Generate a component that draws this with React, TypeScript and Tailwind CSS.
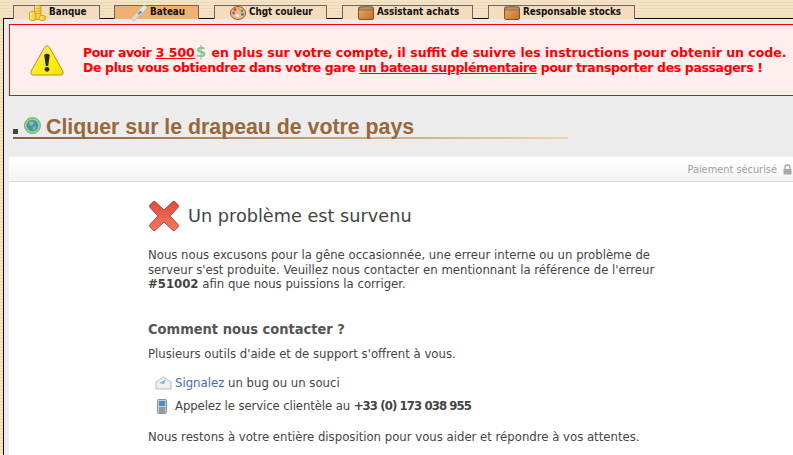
import React from "react";

function Coins() {
  return (
    <svg width="17" height="16" viewBox="0 0 17 16" className="shrink-0">
      <defs>
        <linearGradient id="gold" x1="0" y1="0" x2="1" y2="0">
          <stop offset="0" stopColor="#fff08a" />
          <stop offset="1" stopColor="#eebb22" />
        </linearGradient>
      </defs>
      <rect x="5.5" y="0.5" width="6.5" height="14" rx="1.5" fill="url(#gold)" stroke="#cfa020" />
      <path d="M6 3.5 H12 M6 6 H12 M6 8.5 H12" stroke="#d8a824" strokeWidth="0.7" />
      <rect x="0.5" y="6.5" width="6.5" height="9" rx="2" fill="url(#gold)" stroke="#cfa020" />
      <rect x="10.5" y="10.5" width="6" height="5" rx="2" fill="url(#gold)" stroke="#cfa020" />
    </svg>
  );
}

function Bottle() {
  return (
    <svg width="16" height="16" viewBox="0 0 16 16" className="shrink-0">
      <path d="M0.5 13 L8 5 L11.5 8 L4 15.5 Q2 16 0.8 14.8 Z" fill="#dcd8c4" stroke="#c4b898" strokeWidth="0.6" />
      <path d="M8 5 L12 0.8 Q14 0 15.4 1.6 Q16 3 14.8 4.2 L11.5 8 Z" fill="#dcecf6" stroke="#9cc0d8" strokeWidth="0.6" />
      <path d="M6.5 8 L10 5.5 L11 7 L8 10 Z" fill="#5a9ad0" />
    </svg>
  );
}

function Palette() {
  return (
    <svg width="16" height="14" viewBox="0 0 16 14" className="shrink-0">
      <ellipse cx="8" cy="7" rx="7.5" ry="6.5" fill="#e8bc90" stroke="#8e5c34" />
      <circle cx="5" cy="3.6" r="1.4" fill="#d83a2a" />
      <circle cx="8.6" cy="3" r="1.4" fill="#e8b020" />
      <circle cx="12" cy="4.8" r="1.4" fill="#48a048" />
      <circle cx="12.4" cy="8.4" r="1.4" fill="#3a70c8" />
      <circle cx="3.6" cy="7" r="1.4" fill="#a050b0" />
      <circle cx="7.4" cy="9.6" r="1.5" fill="#fff4e0" />
    </svg>
  );
}

function Crate({ id }: { id: string }) {
  return (
    <svg width="16" height="14" viewBox="0 0 16 14" className="shrink-0">
      <defs>
        <linearGradient id={id} x1="0" y1="0" x2="1" y2="1">
          <stop offset="0" stopColor="#eeb060" />
          <stop offset="1" stopColor="#c8682c" />
        </linearGradient>
      </defs>
      <rect x="0.5" y="1" width="15" height="12.5" rx="1.5" fill={`url(#${id})`} stroke="#80562c" />
      <path d="M1 1.5 Q8 -0.5 15 1.5 V4 H1 Z" fill="#b89468" stroke="#80562c" strokeWidth="0.7" />
    </svg>
  );
}

function Warning() {
  return (
    <svg width="34" height="31" viewBox="0 0 34 31" className="shrink-0">
      <defs>
        <linearGradient id="warn" x1="0" y1="0" x2="1" y2="1">
          <stop offset="0" stopColor="#f4e69a" />
          <stop offset="0.65" stopColor="#fbf000" />
          <stop offset="1" stopColor="#f0e000" />
        </linearGradient>
      </defs>
      <path d="M17 0.8 Q18.5 0.8 19.5 2.5 L32.8 26 Q34 30 30.5 30 H3.5 Q0 30 1.2 26 L14.5 2.5 Q15.5 0.8 17 0.8 Z" fill="url(#warn)" stroke="#b8901c" />
      <path d="M14.2 10 Q17 7.4 19.8 10 L18.2 21 H15.8 Z" fill="#2a2a1a" />
      <circle cx="17" cy="24.3" r="2.4" fill="#2a2a1a" />
    </svg>
  );
}

function Globe() {
  return (
    <svg width="17" height="17" viewBox="0 0 17 17" className="mb-[3px] shrink-0">
      <circle cx="8.5" cy="8.5" r="8" fill="#90d488" stroke="#6cb46c" />
      <circle cx="8.5" cy="8.5" r="5.8" fill="#4a90b8" />
      <path d="M5 5 Q8 3.5 10 5 L9 8 L6 9 Z M9 10 L12 9 L11 13 L9 13 Z" fill="#8cc47c" />
    </svg>
  );
}

function RedCross() {
  return (
    <svg width="32" height="32" viewBox="0 0 32 32" className="shrink-0">
      <defs>
        <linearGradient id="cross" x1="0" y1="0" x2="0" y2="1">
          <stop offset="0" stopColor="#e04a38" />
          <stop offset="1" stopColor="#f47a62" />
        </linearGradient>
      </defs>
      <path d="M7 1.5 L16 10 L25 1.5 Q26 1 27 1.8 L30.5 5.5 Q31 6.5 30 7.5 L22 16 L30 24.5 Q31 25.5 30.5 26.5 L27 30.2 Q26 31 25 30.5 L16 22 L7 30.5 Q6 31 5 30.2 L1.5 26.5 Q1 25.5 2 24.5 L10 16 L2 7.5 Q1 6.5 1.5 5.5 L5 1.8 Q6 1 7 1.5 Z" fill="url(#cross)" stroke="#b04a3a" />
    </svg>
  );
}

function Mail() {
  return (
    <svg width="17" height="14" viewBox="0 0 17 14" className="shrink-0">
      <path d="M1 6 L8.5 1 L16 6 V13 H1 Z" fill="#eef0f2" stroke="#b8bcc0" />
      <path d="M4 7 L11 3.5 L9 8 Z" fill="#7cb4e0" />
    </svg>
  );
}

function Phone() {
  return (
    <svg width="10" height="15" viewBox="0 0 10 15" className="shrink-0">
      <rect x="0.5" y="0.5" width="9" height="14" rx="1" fill="#c4ccd0" stroke="#88949c" />
      <rect x="2" y="2" width="6" height="5" fill="#4a90d0" />
      <path d="M2 9 H8 M2 11 H8 M2 13 H8" stroke="#5c6870" />
    </svg>
  );
}

function Lock() {
  return (
    <svg width="9" height="11" viewBox="0 0 9 11">
      <path d="M2 5 V3.5 a2.5 2.5 0 0 1 5 0 V5" fill="none" stroke="#a8a8a8" strokeWidth="1.3" />
      <rect x="0.5" y="5" width="8" height="5.5" fill="#a8a8a8" />
    </svg>
  );
}

const tabs = [
  { label: "Banque", icon: <Coins />, box: "w-[87px] mr-[14px] pl-[15px] bg-[#f6dcbc]" },
  { label: "Bateau", icon: <Bottle />, box: "w-[85px] mr-[15px] pl-[16px] bg-[#f0b070]" },
  { label: "Chgt couleur", icon: <Palette />, box: "w-[113px] mr-[15px] pl-[15px] bg-[#f6dcbc]" },
  { label: "Assistant achats", icon: <Crate id="crate-a" />, box: "w-[131px] mr-[15px] pl-[15px] bg-[#f6dcbc]" },
  { label: "Responsable stocks", icon: <Crate id="crate-b" />, box: "w-[147px] pl-[15px] bg-[#f6dcbc]" },
];

export default function App() {
  return (
    <div className="h-[455px] w-[793px] overflow-hidden bg-[repeating-linear-gradient(180deg,#f6e2c4_0px,#f6e2c4_2px,#efd8b6_2px,#efd8b6_3px)] font-['DejaVu_Sans',sans-serif]">
      <div className="relative z-10 -mb-px flex h-[19px] items-end pl-[13px]">
        {tabs.map((t) => (
          <div
            key={t.label}
            className={`flex h-[14px] items-center gap-[3px] border border-b-0 border-[#666] font-['DejaVu_Sans_Condensed','DejaVu_Sans',sans-serif] text-[9.8px] font-bold text-[#111] ${t.box}`}
          >
            {t.icon}
            <span className="whitespace-nowrap">{t.label}</span>
          </div>
        ))}
      </div>

      <div className="ml-[3px] h-[437px] border-l border-t border-[#111] bg-[#ececec] pl-[5px] pt-[5px]">
        <div className="-mr-[4px] flex h-[72px] items-center border border-[#ff0000] bg-[#ffeeee] pl-[20px]">
          <Warning />
          <p className="ml-[19px] whitespace-nowrap text-[12.5px] font-bold leading-[15px] text-[#ff0000]">
            <span className="tracking-[-0.45px]">Pour avoir</span> <span className="underline">3 500</span>
            <span className="mx-[1px] text-[15px] leading-[0] text-[#8cc88c]">$</span> en plus sur votre compte, il suffit de suivre les instructions pour obtenir un code.
            <br />
            <span className="tracking-[-0.37px]">
              De plus vous obtiendrez dans votre gare <span className="underline">un bateau supplémentaire</span> pour transporter des passagers !
            </span>
          </p>
        </div>

        <div className="ml-[4px] mt-[19px] flex h-[22px] items-end">
          <span className="mb-[3px] mr-[6px] h-[5px] w-[5px] bg-[#444]" />
          <Globe />
          <h1 className="ml-[5px] font-['Liberation_Sans',sans-serif] text-[21.3px] font-bold leading-[20px] text-[#96683a]">
            Cliquer sur le drapeau de votre pays
          </h1>
        </div>
        <div className="ml-[4px] h-[2px] w-[555px] bg-gradient-to-r from-[#8e5f30] to-[#eed2b0]" />

        <div className="mt-[18px] h-[298px] bg-white">
          <div className="flex h-[25px] items-center justify-end gap-[6px] border-b border-[#dddddd] bg-gradient-to-b from-white to-[#f3f3f3] pr-[1px] text-[9.8px] text-[#a0a0a0]">
            <span className="mt-[2px]">Paiement sécurisé</span>
            <Lock />
          </div>

          <div className="pl-[139px] pt-[18px] font-['DejaVu_Sans_Condensed','DejaVu_Sans',sans-serif] text-[13px] leading-[14.5px] text-[#444]">
            <div className="flex items-center gap-[8px]">
              <RedCross />
              <h2 className="mt-[1px] font-['DejaVu_Sans',sans-serif] text-[17.7px] font-normal text-[#444]">Un problème est survenu</h2>
            </div>
            <p className="mt-[16px] w-[560px]">
              Nous nous excusons pour la gêne occasionnée, une erreur interne ou un problème de
              <br />
              serveur s'est produite. Veuillez nous contacter en mentionnant la référence de l'erreur
              <br />
              <b>#51002</b> afin que nous puissions la corriger.
            </p>
            <h3 className="mt-[28px] text-[14.5px] font-bold leading-[18px] text-[#555]">Comment nous contacter ?</h3>
            <p className="mt-[9px]">Plusieurs outils d'aide et de support s'offrent à vous.</p>
            <div className="mt-[14px] flex h-[16px] items-center gap-[3px] pl-[7px]">
              <Mail />
              <span>
                <span className="text-[#4a68b0]">Signalez</span> un bug ou un souci
              </span>
            </div>
            <div className="mt-[7px] flex h-[16px] items-center gap-[8px] pl-[9px]">
              <Phone />
              <span className="tracking-[-0.1px]">
                Appelez le service clientèle au <b className="tracking-[-0.9px]">+33 (0) 173 038 955</b>
              </span>
            </div>
            <p className="mt-[16px]">Nous restons à votre entière disposition pour vous aider et répondre à vos attentes.</p>
          </div>
        </div>
      </div>
    </div>
  );
}
